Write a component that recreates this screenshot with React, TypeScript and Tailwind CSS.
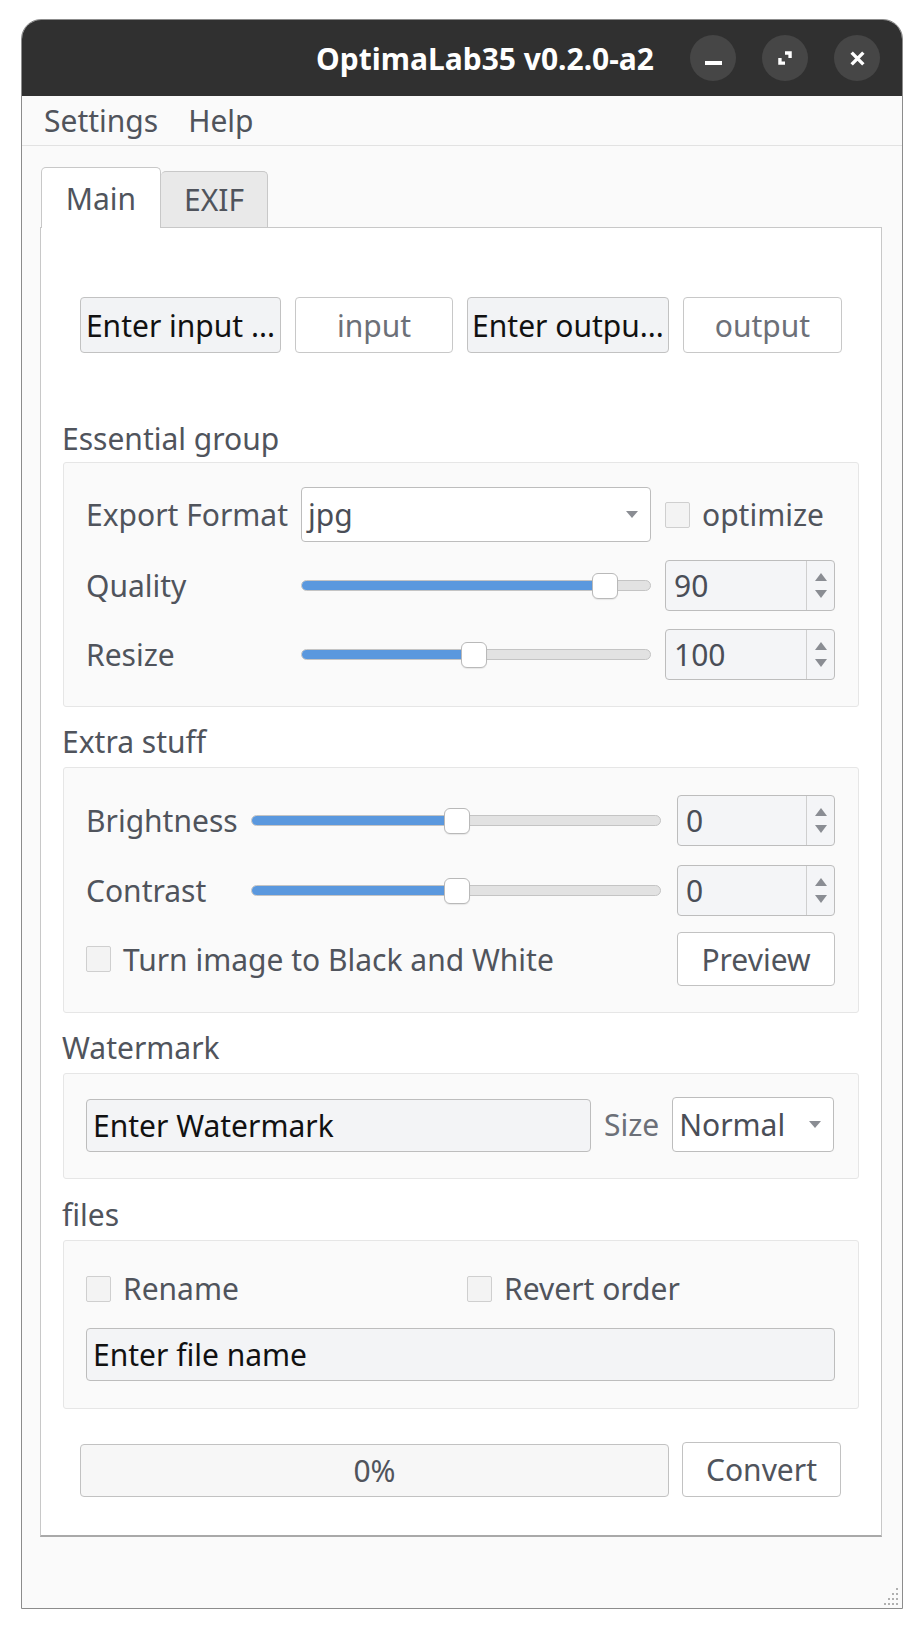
import React from 'react'

// Qt-style widgets, drawn as flat light theme

function Slider({ value }: { value: number }) {
  return (
    <div className="relative h-[26px] flex items-center w-full">
      <div className="h-[11px] w-full rounded-full border border-[#c4c4c4] bg-[#e2e2e2] overflow-hidden flex">
        <div className="h-full bg-[#5a98de] border-r border-[#3f7cc4]" style={{ width: `${value}%` }} />
      </div>
      <div
        className="absolute top-0 h-[26px] w-[26px] -ml-[13px] rounded-[6px] border border-[#b9b9b9] bg-white shadow-[0_1px_1px_rgba(0,0,0,0.08)]"
        style={{ left: `${value}%` }}
      />
    </div>
  )
}

function SpinBox({ value, className = '' }: { value: string; className?: string }) {
  return (
    <div className={`flex h-[51px] rounded-[4px] border border-[#bdbdbd] bg-[#f4f5f7] ${className}`}>
      <div className="flex-1 flex items-center pl-[8px] text-[30px] text-[#4a4e57]">{value}</div>
      <div className="w-[28px] border-l border-[#cfcfcf] flex flex-col items-center justify-center gap-[9px]">
        <div className="w-0 h-0 border-l-[6px] border-r-[6px] border-b-[8px] border-l-transparent border-r-transparent border-b-[#8a8d93]" />
        <div className="w-0 h-0 border-l-[6px] border-r-[6px] border-t-[8px] border-l-transparent border-r-transparent border-t-[#8a8d93]" />
      </div>
    </div>
  )
}

function Check({ label }: { label: string }) {
  return (
    <div className="flex items-center gap-[12px] whitespace-nowrap">
      <div className="w-[25px] h-[26px] rounded-[2px] border border-[#cfcfcf] bg-[#f3f3f3]" />
      <span className="text-[30px] text-[#50545c]">{label}</span>
    </div>
  )
}

function Combo({ value, className = '' }: { value: string; className?: string }) {
  return (
    <div className={`flex items-center justify-between rounded-[4px] border border-[#bdbdbd] bg-white pl-[6px] pr-[12px] ${className}`}>
      <span className="text-[30px] text-[#4a4e57]">{value}</span>
      <div className="w-0 h-0 border-l-[6px] border-r-[6px] border-t-[7px] border-l-transparent border-r-transparent border-t-[#8a8d93]" />
    </div>
  )
}

function Label({ children }: { children: React.ReactNode }) {
  return <div className="whitespace-nowrap text-[30px] text-[#50545c]">{children}</div>
}

function GroupTitle({ children, className = '' }: { children: React.ReactNode; className?: string }) {
  return <div className={`h-[36px] leading-[36px] text-[30px] text-[#50545c] -ml-[1px] ${className}`}>{children}</div>
}

function TitleButton({ children }: { children: React.ReactNode }) {
  return (
    <div className="w-[46px] h-[46px] rounded-full bg-[#464646] flex items-center justify-center text-white">
      {children}
    </div>
  )
}

export default function App() {
  return (
    <div className="w-[924px] h-[1632px] bg-white pt-[19px] pl-[21px] font-['Noto_Sans',sans-serif]">
      <div className="w-[882px] h-[1590px] flex flex-col rounded-t-[20px] overflow-hidden border border-[#8c8c8c] bg-[#fafafa]">
        {/* title bar */}
        <div className="h-[76px] shrink-0 bg-[#303030] flex items-center justify-end pr-[22px]">
          <span className="text-[30px] font-bold text-white mr-[36px]">OptimaLab35 v0.2.0-a2</span>
          <div className="flex gap-[26px]">
            <TitleButton>
              <div className="w-[17px] h-[4px] bg-white mt-[9px]" />
            </TitleButton>
            <TitleButton>
              <svg width="18" height="18" viewBox="0 0 16 16">
                <path d="M8 2h6v6h-3V5H8z M2 8h3v3h3v3H2z" fill="white" />
              </svg>
            </TitleButton>
            <TitleButton>
              <svg width="17" height="17" viewBox="0 0 16 16">
                <path d="M2.5 2.5l11 11M13.5 2.5l-11 11" stroke="white" strokeWidth="3.2" />
              </svg>
            </TitleButton>
          </div>
        </div>

        {/* menu bar */}
        <div className="h-[50px] shrink-0 border-b border-[#e2e2e2] flex items-center pl-[22px] gap-[30px] text-[30px] text-[#50545c]">
          <span>Settings</span>
          <span>Help</span>
        </div>

        {/* central widget */}
        <div className="flex-1 flex flex-col px-[18px] pt-[21px]">
          <div className="flex items-end h-[60px] pl-[1px]">
            <div className="h-[61px] w-[120px] -mb-[1px] rounded-t-[5px] border border-b-0 border-[#c8c8c8] bg-white flex items-center justify-center text-[30px] text-[#50545c] relative z-10">
              Main
            </div>
            <div className="h-[56px] w-[107px] rounded-t-[5px] border border-l-0 border-b-0 border-[#c8c8c8] bg-[#e9e9e9] flex items-center justify-center text-[30px] text-[#50545c]">
              EXIF
            </div>
          </div>

          <div className="w-[842px] h-[1310px] border border-[#c8c8c8] border-b-2 border-b-[#a9a9a9] bg-white px-[22px] flex flex-col">
            {/* path buttons */}
            <div className="mt-[69px] h-[56px] mx-[17px] grid grid-cols-[201px_158px_202px_159px] gap-[14px]">
              <div className="rounded-[4px] border border-[#c2c2c2] bg-[#f2f3f5] flex items-center justify-center text-[30px] text-[#111]">Enter input ...</div>
              <div className="rounded-[4px] border border-[#c8c8c8] bg-white flex items-center justify-center text-[30px] text-[#6c7078]">input</div>
              <div className="rounded-[4px] border border-[#c2c2c2] bg-[#f2f3f5] flex items-center justify-center text-[30px] text-[#111]">Enter outpu...</div>
              <div className="rounded-[4px] border border-[#c8c8c8] bg-white flex items-center justify-center text-[30px] text-[#6c7078]">output</div>
            </div>

            {/* Essential group */}
            <GroupTitle className="mt-[68px]">Essential group</GroupTitle>
            <div className="mt-[5px] h-[245px] rounded-[3px] border border-[#e6e6e6] bg-[#fafafa] pl-[22px] pr-[22px] pt-[24px]">
              <div className="grid grid-cols-[201px_350px_170px] gap-x-[14px] items-center">
                <Label>Export Format</Label>
                <Combo value="jpg" className="h-[55px]" />
                <Check label="optimize" />
              </div>
              <div className="mt-[18px] grid grid-cols-[201px_350px_170px] gap-x-[14px] items-center">
                <Label>Quality</Label>
                <Slider value={86.8} />
                <SpinBox value="90" />
              </div>
              <div className="mt-[18px] grid grid-cols-[201px_350px_170px] gap-x-[14px] items-center">
                <Label>Resize</Label>
                <Slider value={49.4} />
                <SpinBox value="100" />
              </div>
            </div>

            {/* Extra stuff */}
            <GroupTitle className="mt-[17px]">Extra stuff</GroupTitle>
            <div className="mt-[7px] h-[246px] rounded-[3px] border border-[#e6e6e6] bg-[#fafafa] pl-[22px] pr-[22px] pt-[27px]">
              <div className="grid grid-cols-[149px_410px_158px] gap-x-[16px] items-center">
                <Label>Brightness</Label>
                <Slider value={50.2} />
                <SpinBox value="0" />
              </div>
              <div className="mt-[19px] grid grid-cols-[149px_410px_158px] gap-x-[16px] items-center">
                <Label>Contrast</Label>
                <Slider value={50.2} />
                <SpinBox value="0" />
              </div>
              <div className="mt-[16px] flex items-center justify-between w-[749px]">
                <Check label="Turn image to Black and White" />
                <div className="w-[158px] h-[54px] rounded-[4px] border border-[#c2c2c2] bg-white flex items-center justify-center text-[30px] text-[#50545c]">
                  Preview
                </div>
              </div>
            </div>

            {/* Watermark */}
            <GroupTitle className="mt-[17px]">Watermark</GroupTitle>
            <div className="mt-[7px] h-[106px] rounded-[3px] border border-[#e6e6e6] bg-[#fafafa] pl-[22px] pr-[22px] pt-[23px] flex items-start">
              <div className="mt-[2px] w-[505px] h-[53px] rounded-[4px] border border-[#bdbdbd] bg-[#f3f4f6] flex items-center pl-[6px] text-[30px] text-[#111]">
                Enter Watermark
              </div>
              <div className="ml-[13px] h-[55px] flex items-center text-[30px] text-[#6c7078]">Size</div>
              <Combo value="Normal" className="ml-[13px] w-[162px] h-[55px]" />
            </div>

            {/* files */}
            <GroupTitle className="mt-[18px]">files</GroupTitle>
            <div className="mt-[7px] h-[169px] rounded-[3px] border border-[#e6e6e6] bg-[#fafafa] pl-[22px] pr-[22px] pt-[25px]">
              <div className="grid grid-cols-[381px_1fr] items-center">
                <Check label="Rename" />
                <Check label="Revert order" />
              </div>
              <div className="mt-[17px] h-[53px] w-[749px] rounded-[4px] border border-[#bdbdbd] bg-[#f3f4f6] flex items-center pl-[6px] text-[30px] text-[#111]">
                Enter file name
              </div>
            </div>

            {/* progress */}
            <div className="mt-[33px] mx-[17px] h-[55px] flex gap-[13px]">
              <div className="w-[589px] mt-[2px] rounded-[4px] border border-[#c2c2c2] bg-[#f7f7f7] flex items-center justify-center text-[30px] text-[#50545c]">
                0%
              </div>
              <div className="w-[159px] rounded-[4px] border border-[#c2c2c2] bg-white flex items-center justify-center text-[30px] text-[#50545c]">
                Convert
              </div>
            </div>
          </div>

          {/* size grip */}
          <div className="flex-1 flex items-end justify-end pb-[2px] -mr-[16px]">
            <svg width="22" height="22" viewBox="0 0 22 22">
              {[
                [18, 4], [14, 9], [18, 9], [10, 14], [14, 14], [18, 14], [6, 19], [10, 19], [14, 19], [18, 19],
              ].map(([x, y], i) => (
                <rect key={i} x={x} y={y} width="2" height="2" fill="#b0b0b0" />
              ))}
            </svg>
          </div>
        </div>
      </div>
    </div>
  )
}
